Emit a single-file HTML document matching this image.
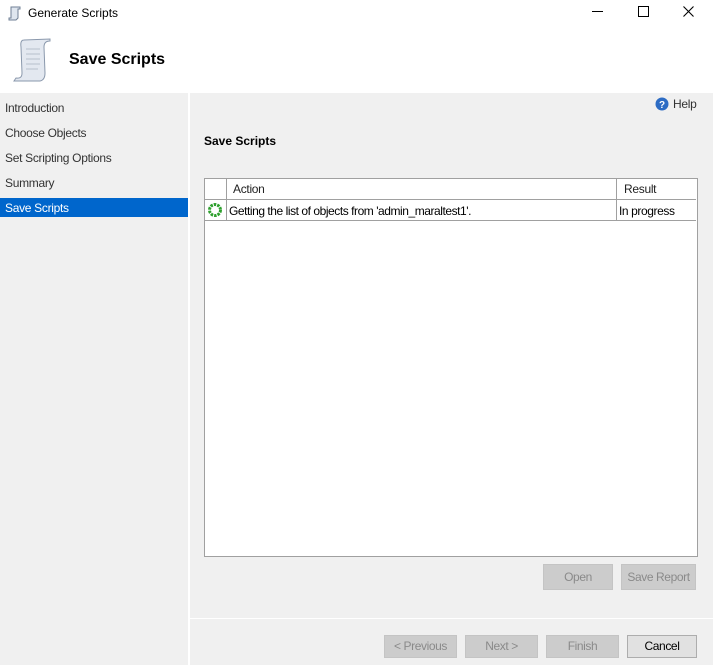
<!DOCTYPE html>
<html><head><style>
body{margin:0;width:713px;height:665px;position:relative;background:#fff;font-family:"Liberation Sans",sans-serif;font-size:12px;color:#000;overflow:hidden}
.a{position:absolute}
.nav{left:0;top:93px;width:188px;height:572px;background:#f0f0f0}
.nav div{position:absolute;left:5px;color:#333;font-size:12px;letter-spacing:-0.3px}
.main{left:190px;top:93px;width:523px;height:572px;background:#f0f0f0}
.btn{position:absolute;height:21px;border:1px solid #c4c4c4;background:#cccccc;color:#8a8a8a;text-align:center;line-height:21px;font-size:12px;letter-spacing:-0.4px}
</style></head><body>
<svg class="a" style="left:7px;top:5px" width="16" height="16" viewBox="0 0 16 16"><path d="M4 2h9v2h-2v9l-2 2H2v-2h2z" fill="#dfe6ef" stroke="#6f7f94"/></svg>
<div class="a" style="left:28px;top:6px;font-size:12px">Generate Scripts</div>
<div class="a" style="left:592px;top:11px;width:11px;height:1px;background:#000"></div>
<div class="a" style="left:638px;top:6px;width:9px;height:9px;border:1px solid #000"></div>
<svg class="a" style="left:683px;top:6px" width="11" height="11"><path d="M0.5 0.5L10.5 10.5M10.5 0.5L0.5 10.5" stroke="#000" stroke-width="1.1"/></svg>
<svg class="a" style="left:10px;top:37px" width="42" height="46" viewBox="0 0 42 46">
<path d="M14 3 Q10 3 11 10 L12 36 Q12 42 6 41 L4 44 L30 44 Q35 43 35 36 L34 10 Q34 4 40 4 L40 2 Z" fill="#e3e8f0" stroke="#8a98ac"/>
<path d="M16 12h14M16 17h14M16 22h14M16 27h14M16 32h12" stroke="#b7c0cc"/></svg>
<div class="a" style="left:69px;top:51px;font-size:16px;font-weight:bold">Save Scripts</div>
<div class="a nav">
<div style="top:8px">Introduction</div>
<div style="top:33px">Choose Objects</div>
<div style="top:58px">Set Scripting Options</div>
<div style="top:83px">Summary</div>
</div>
<div class="a" style="left:0;top:198px;width:188px;height:19px;background:#0066cc;color:#fff"><span style="position:absolute;left:5px;top:3px;letter-spacing:-0.3px">Save Scripts</span></div>
<div class="a main"></div>
<svg class="a" style="left:655px;top:97px" width="14" height="14"><circle cx="7" cy="7" r="6.5" fill="#2d6cc4"/><text x="7" y="11" font-size="10" font-weight="bold" fill="#fff" text-anchor="middle" font-family="Liberation Sans">?</text></svg>
<div class="a" style="left:673px;top:97px;color:#333;letter-spacing:-0.3px">Help</div>
<div class="a" style="left:204px;top:134px;font-weight:bold;font-size:12px">Save Scripts</div>
<div class="a" style="left:204px;top:178px;width:492px;height:377px;border:1px solid #a0a0a0;background:#fff"></div>
<div class="a" style="left:205px;top:179px;width:491px;height:20px;border-bottom:1px solid #a0a0a0"></div>
<div class="a" style="left:205px;top:200px;width:491px;height:20px;border-bottom:1px solid #a0a0a0"></div>
<div class="a" style="left:226px;top:179px;width:1px;height:42px;background:#a0a0a0"></div>
<div class="a" style="left:616px;top:179px;width:1px;height:42px;background:#a0a0a0"></div>
<div class="a" style="left:233px;top:182px;color:#222;letter-spacing:-0.3px">Action</div>
<div class="a" style="left:624px;top:182px;color:#222;letter-spacing:-0.3px">Result</div>
<svg class="a" style="left:207px;top:202px" width="16" height="16"><circle cx="8" cy="8" r="5.5" fill="none" stroke="#2ea02e" stroke-width="3" stroke-dasharray="2.5 1"/></svg>
<div class="a" style="left:229px;top:204px;letter-spacing:-0.45px">Getting the list of objects from 'admin_maraltest1'.</div>
<div class="a" style="left:619px;top:204px;letter-spacing:-0.4px">In progress</div>
<div class="btn" style="left:543px;top:564px;width:68px;height:24px;line-height:24px">Open</div>
<div class="btn" style="left:621px;top:564px;width:73px;height:24px;line-height:24px">Save Report</div>
<div class="a" style="left:190px;top:618px;width:523px;height:1px;background:#fff"></div>
<div class="btn" style="left:384px;top:635px;width:71px">&lt; Previous</div>
<div class="btn" style="left:465px;top:635px;width:71px">Next &gt;</div>
<div class="btn" style="left:546px;top:635px;width:71px">Finish</div>
<div class="btn" style="left:627px;top:635px;width:68px;background:#e1e1e1;border-color:#adadad;color:#000">Cancel</div>
</body></html>
